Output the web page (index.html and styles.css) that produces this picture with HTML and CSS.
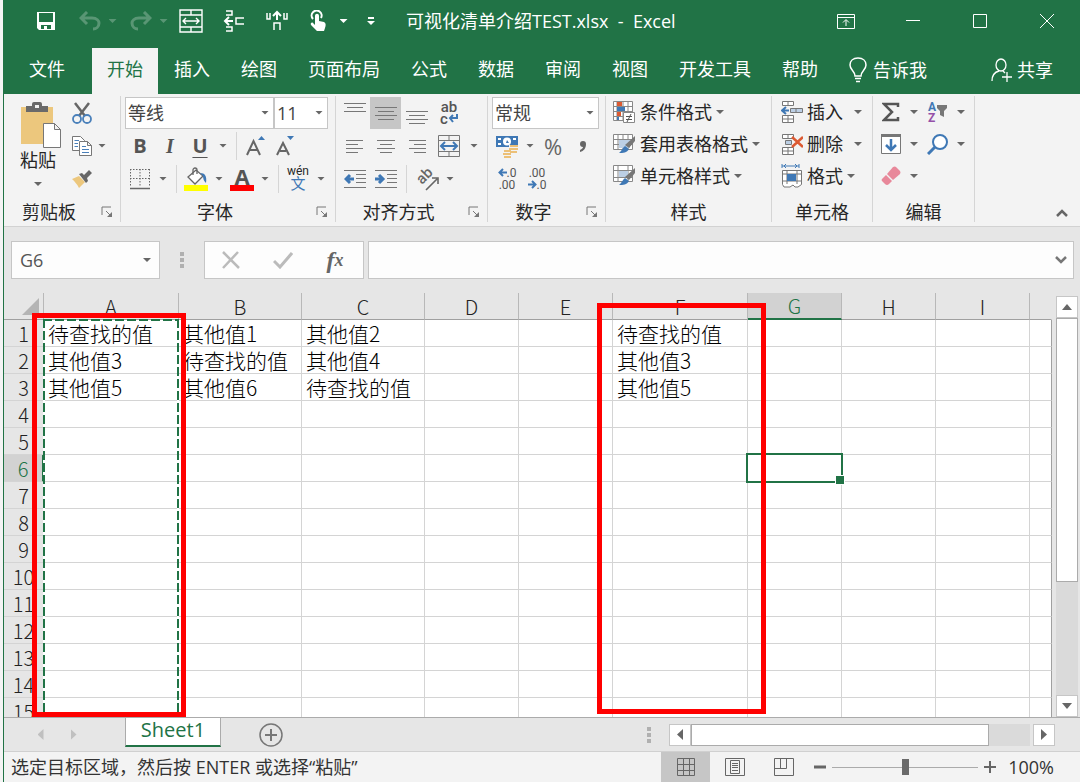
FILE: index.html
```html
<!DOCTYPE html>
<html lang="zh-CN">
<head>
  <meta charset="UTF-8" />
  <meta name="viewport" content="width=device-width, initial-scale=1" />
  <title>可视化清单介绍TEST.xlsx - Excel</title>
  <link rel="stylesheet" href="styles.css">
</head>
<body>

<!-- Shared icons -->
<svg class="sprite" aria-hidden="true">
  <symbol id="i-launch" viewBox="0 0 12 12">
    <path d="M1 9V1H10M5 5L10 10" fill="none" stroke="#777" />
    <path d="M11 6V11H6Z" fill="#777" />
  </symbol>
  <symbol id="i-brush" viewBox="0 0 22 22">
    <path d="M22 3L22 8L16 15L12 12Z" fill="#777" />
    <path d="M12 13L16 16C14 20 10 20 6 20C9 18 9 15 12 13Z" fill="#3f78b5" />
  </symbol>
</svg>

<div class="app">

<!-- Title bar -->
<header class="titlebar">
  <button class="qat" aria-label="保存">
    <svg width="20" height="20" viewBox="0 0 20 20"><path d="M1 1H19V19H3L1 17Z" fill="#fff" /><path d="M3 2H17V11H3ZM5 14H15V18H11V15H8V18H5Z" fill="#217346" /></svg>
  </button>
  <button class="qat split faded" aria-label="撤消">
    <svg width="22" height="20" viewBox="0 0 22 20"><path d="M2 7H13C18 7 20 10 20 12C20 16 17 18 14 18M8 1L2 7L8 13" fill="none" stroke="#fff" stroke-width="3" /></svg><i class="caret"></i>
  </button>
  <button class="qat split faded" aria-label="恢复">
    <svg width="22" height="20" viewBox="0 0 22 20"><path d="M20 7H9C4 7 2 10 2 12C2 16 5 18 8 18M14 1L20 7L14 13" fill="none" stroke="#fff" stroke-width="3" /></svg><i class="caret"></i>
  </button>
  <button class="qat" aria-label="合并后居中">
    <svg width="24" height="24" viewBox="0 0 24 24" fill="none" stroke="#fff" stroke-width="1.4"><path d="M1 1H23V23H1ZM1 6H23M1 18H23M12 1V6M12 18V23M4 12H20M7 9L4 12L7 15M17 9L20 12L17 15" /></svg>
  </button>
  <button class="qat" aria-label="插入单元格">
    <svg width="22" height="22" viewBox="0 0 22 22" fill="none" stroke="#fff" stroke-width="1.5"><path d="M3 1H9V5H3M3 21H9V17H3M21 8H13V14H21" /><path d="M10 11H3M6 7L2 11L6 15" stroke-width="2" /></svg>
  </button>
  <button class="qat" aria-label="插入工作表行">
    <svg width="24" height="22" viewBox="0 0 24 22" fill="none" stroke="#fff" stroke-width="1.5"><path d="M2 3V9H5V3M19 3V9H22V3M9 20V13H15V20" /><path d="M12 10V3M8 6L12 2L16 6" stroke-width="2" /></svg>
  </button>
  <button class="qat split" aria-label="触摸/鼠标模式">
    <svg width="22" height="22" viewBox="0 0 22 22"><path d="M3 9A5 5 0 1 1 11 8" fill="none" stroke="#fff" stroke-width="2" /><path d="M5 6C5 3 9 3 9 6V11L14 12C16 13 16 15 15 18L14 21H7L1 15C0 13 2 12 3 13L5 15Z" fill="#fff" /></svg><i class="caret"></i>
  </button>
  <button class="qat" aria-label="自定义快速访问工具栏">
    <svg width="8" height="10" viewBox="0 0 8 10"><path d="M1 1H7V3H1ZM0 5H8L4 9Z" fill="#fff" /></svg>
  </button>
  <h1 class="doc-title">可视化清单介绍TEST.xlsx &nbsp;-&nbsp; Excel</h1>
  <div class="window-buttons">
    <button aria-label="功能区显示选项"><svg width="18" height="18" viewBox="0 0 18 18" fill="none" stroke="#fff"><path d="M.5 2.5H17.5V16.5H.5ZM.5 5.5H17.5M9 14V8M6 10.5L9 7.5L12 10.5" /></svg></button>
    <button aria-label="最小化"><svg width="16" height="16" viewBox="0 0 16 16"><path d="M1 7.5H15" stroke="#fff" /></svg></button>
    <button aria-label="最大化"><svg width="16" height="18" viewBox="0 0 16 18"><path d="M1.5 2.5H14.5V15.5H1.5Z" fill="none" stroke="#fff" /></svg></button>
    <button aria-label="关闭"><svg width="16" height="16" viewBox="0 0 16 16"><path d="M1 1L15 15M15 1L1 15" stroke="#fff" /></svg></button>
  </div>
</header>

<!-- Ribbon tabs -->
<nav class="tabs">
  <a href="#" class="file">文件</a>
  <a href="#" class="active">开始</a>
  <a href="#">插入</a>
  <a href="#">绘图</a>
  <a href="#">页面布局</a>
  <a href="#">公式</a>
  <a href="#">数据</a>
  <a href="#">审阅</a>
  <a href="#">视图</a>
  <a href="#">开发工具</a>
  <a href="#">帮助</a>
  <a href="#" class="tell-me">
    <svg width="18" height="26" viewBox="0 0 18 26" fill="none" stroke="#fff" stroke-width="1.5"><path d="M6 19C6 14 1 13 1 8C1 4 4 1 9 1C14 1 17 4 17 8C17 13 12 14 12 19ZM6 21.5H12M7 24.5H11" /></svg>
    告诉我
  </a>
  <a href="#" class="share">
    <svg width="22" height="24" viewBox="0 0 22 24" fill="none" stroke="#fff" stroke-width="1.3"><path d="M10 1A5 6 0 0 1 10 13A5 6 0 0 1 10 1ZM1 23C1 17 4 14 8 13M12 13L14 15M16 14V24M11 19H21" /></svg>
    共享
  </a>
</nav>

<!-- Ribbon -->
<section class="ribbon">
  <div class="group g-clipboard">
    <div class="tools paste-tools">
      <button class="paste">
        <svg width="48" height="46" viewBox="-6 0 48 46"><path d="M1 5H33V42H1Z" fill="#ecc77d" /><path d="M6 4H12V2Q12 0 14 0H20Q22 0 22 2V4H28V10H6Z" fill="#6a6a6a" /><path d="M15 3H19V6H15Z" fill="#f3f3f3" /><path d="M23.5 21.5H34.5L40.5 27.5V45.5H23.5ZM34.5 21.5V27.5H40.5" fill="#fff" stroke="#777" /></svg>
        <span>粘贴</span>
        <i class="caret"></i>
      </button>
      <div class="rows">
        <div class="row">
          <button class="w24" aria-label="剪切"><svg width="20" height="22" viewBox="0 0 20 22"><path d="M3 1L13 14M17 1L7 14" stroke="#666" stroke-width="2.5" /><circle cx="5" cy="17" r="4" fill="none" stroke="#4a80ba" stroke-width="1.8" /><circle cx="15" cy="17" r="4" fill="none" stroke="#4a80ba" stroke-width="1.8" /></svg></button>
        </div>
        <div class="row">
          <button class="w24" aria-label="复制"><svg width="22" height="22" viewBox="0 0 22 22" fill="#fff" stroke="#777"><path d="M1.5 1.5H9.5L13.5 5.5V15.5H1.5Z" /><path d="M8.5 6.5H16.5L20.5 10.5V20.5H8.5ZM16.5 6.5V10.5H20.5" /><path d="M3.5 5.5H8M3.5 8.5H7M3.5 11.5H7M11 11.5H15M11 14.5H18M11 17.5H18" stroke="#4a80ba" /></svg></button>
          <button class="arrow" aria-label="复制选项"><i class="caret"></i></button>
        </div>
        <div class="row">
          <button class="w24" aria-label="格式刷"><svg width="22" height="20" viewBox="0 0 22 20"><path d="M1 10L8 7L14 13L8 19C6 15 4 13 1 10Z" fill="#ecc77d" /><path d="M8 5L11 4L13 6L18 1L21 4L16 9L17 12L15 14Z" fill="#666" /></svg></button>
        </div>
      </div>
    </div>
    <div class="caption"><span>剪贴板</span><button aria-label="剪贴板设置"><svg width="12" height="12"><use href="#i-launch" /></svg></button></div>
  </div>

  <div class="group g-font">
    <div class="tools">
      <div class="row">
        <div class="combo font-name"><select aria-label="字体"><option>等线</option></select><i class="caret"></i></div>
        <div class="combo font-size"><select aria-label="字号"><option>11</option></select><i class="caret"></i></div>
      </div>
      <div class="row">
        <button class="w30 letter" aria-label="加粗"><b>B</b></button>
        <button class="w30 letter italic" aria-label="倾斜"><b>I</b></button>
        <button class="w30 letter underline" aria-label="下划线"><b>U</b></button>
        <button class="arrow" aria-label="下划线选项"><i class="caret"></i></button>
        <i class="sep"></i>
        <button class="w30" aria-label="增大字号"><svg width="20" height="22" viewBox="0 0 20 22"><path d="M1 20L7.500 6L14 20M4 15H11" fill="none" stroke="#666" stroke-width="2" /><path d="M12 5H19L15.500 1Z" fill="#3f78b5" /></svg></button>
        <button class="w30" aria-label="减小字号"><svg width="20" height="22" viewBox="0 0 20 22"><path d="M1 20L7 8L13 20M4 16H10" fill="none" stroke="#666" stroke-width="2" /><path d="M11 1H18L14.500 5Z" fill="#3f78b5" /></svg></button>
      </div>
      <div class="row">
        <button class="w30" aria-label="边框"><svg width="22" height="22" viewBox="0 0 22 22" fill="none" stroke="#666"><path d="M1.5 1V19M11 1V19M20.5 1V19M1 1.5H21M1 10.5H21" stroke-dasharray="1.5 1.5" /><path d="M1 20.5H21" stroke-width="1.5" /></svg></button>
        <button class="arrow" aria-label="边框选项"><i class="caret"></i></button>
        <i class="sep"></i>
        <button class="w30" aria-label="填充颜色"><svg width="24" height="24" viewBox="0 0 24 24"><path d="M4 10L12 3L19 9L11 17Z" fill="#fff" stroke="#666" stroke-width="1.3" /><path d="M9 8V3A2 2 0 0 1 13 3V7" fill="none" stroke="#666" stroke-width="1.3" /><path d="M16 6C21 6 23 9 22 16C20 14 19 12 19 9Z" fill="#3f78b5" /><path d="M0 18H24V24H0Z" fill="#ff0" /></svg></button>
        <button class="arrow" aria-label="填充颜色选项"><i class="caret"></i></button>
        <button class="w30 font-color" aria-label="字体颜色"><b>A</b></button>
        <button class="arrow" aria-label="字体颜色选项"><i class="caret"></i></button>
        <i class="sep"></i>
        <button class="w30 phonetic" aria-label="拼音指南"><span>wén</span><span class="han">文</span></button>
        <button class="arrow" aria-label="拼音选项"><i class="caret"></i></button>
      </div>
    </div>
    <div class="caption"><span>字体</span><button aria-label="字体设置"><svg width="12" height="12"><use href="#i-launch" /></svg></button></div>
  </div>

  <div class="group g-align">
    <div class="tools">
      <div class="row">
        <button class="w31" aria-label="顶端对齐"><svg class="lines" width="22" height="22" viewBox="0 0 22 22"><path d="M0 1.5H22M3 5.5H19M0 9.5H22" /></svg></button>
        <button class="w31 pressed" aria-label="垂直居中"><svg class="lines" width="22" height="22" viewBox="0 0 22 22"><path d="M0 5.5H22M3 9.5H19M0 13.5H22M3 17.5H19" /></svg></button>
        <button class="w31" aria-label="底端对齐"><svg class="lines" width="22" height="22" viewBox="0 0 22 22"><path d="M0 9.5H22M3 13.5H19M0 17.5H22M3 21.5H19" /></svg></button>
        <button class="w34 wrap" aria-label="自动换行"><span>ab</span><span>c<svg width="10" height="9" viewBox="0 0 10 9"><path d="M9 0V4H2M5 1L2 4L5 8" fill="none" stroke="#3f78b5" stroke-width="2" /></svg></span></button>
      </div>
      <div class="row">
        <button class="w31" aria-label="左对齐"><svg class="lines" width="18" height="14" viewBox="0 0 18 14"><path d="M0 1.5H17M0 5.5H12M0 9.5H17M0 13.5H12" /></svg></button>
        <button class="w31" aria-label="居中"><svg class="lines" width="18" height="14" viewBox="0 0 18 14"><path d="M0 1.5H18M3 5.5H15M0 9.5H18M3 13.5H15" /></svg></button>
        <button class="w31" aria-label="右对齐"><svg class="lines" width="18" height="14" viewBox="0 0 18 14"><path d="M1 1.5H18M6 5.5H18M1 9.5H18M6 13.5H18" /></svg></button>
        <button class="w34" aria-label="合并后居中"><svg width="24" height="24" viewBox="0 0 24 24" fill="none" stroke="#777"><path d="M1.5 1.5H22.5V22.5H1.5ZM1 6.5H23M1 17.5H23M12 1V6M12 18V23" /><path d="M4 12H20M8 8L4 12L8 16M16 8L20 12L16 16" stroke="#3f78b5" stroke-width="2" /></svg></button>
        <button class="arrow" aria-label="合并选项"><i class="caret"></i></button>
      </div>
      <div class="row">
        <button class="w31" aria-label="减少缩进量"><svg class="lines" width="22" height="20" viewBox="0 0 22 20"><path d="M0 1.5H22M12 5.5H22M12 9.5H22M12 13.5H22M0 18.5H22" /><path d="M10 10H3M6 6L2 10L6 14" class="blue" /></svg></button>
        <button class="w31" aria-label="增加缩进量"><svg class="lines" width="22" height="20" viewBox="0 0 22 20"><path d="M0 1.5H22M12 5.5H22M12 9.5H22M12 13.5H22M0 18.5H22" /><path d="M0 10H7M4 6L8 10L4 14" class="blue" /></svg></button>
        <i class="sep near"></i>
        <button class="w30" aria-label="方向"><svg class="orient" width="26" height="26" viewBox="0 0 26 26"><text x="0" y="0" class="slanted" transform="translate(8 19) rotate(-45)">ab</text><path d="M12 24L23 13M18 12H24V18" fill="none" stroke="#666" stroke-width="1.6" /></svg></button>
        <button class="arrow" aria-label="方向选项"><i class="caret"></i></button>
      </div>
    </div>
    <div class="caption"><span>对齐方式</span><button aria-label="对齐设置"><svg width="12" height="12"><use href="#i-launch" /></svg></button></div>
  </div>

  <div class="group g-number">
    <div class="tools">
      <div class="row">
        <div class="combo number-format"><select aria-label="数字格式"><option>常规</option></select><i class="caret"></i></div>
      </div>
      <div class="row">
        <button class="w30" aria-label="会计数字格式"><svg width="24" height="24" viewBox="0 0 24 24"><path d="M1 2H23V13H1Z" fill="#3f78b5" /><circle cx="12" cy="7.5" r="4" fill="#fff" /><path d="M3 4H6V6H3ZM18 4H21V6H18ZM3 9H6V11H3Z" fill="#fff" /><path d="M12 6L14 9H11Z" fill="#3f78b5" /><path d="M14 11H23V21H17V24H8V15H14Z" fill="#f3f3f3" /><path d="M15 12H23M14 15H23M15 18H22M9 17H16M8 20H16M9 23H16" stroke="#ecc077" stroke-width="2.2" /></svg></button>
        <button class="arrow" aria-label="会计格式选项"><i class="caret"></i></button>
        <button class="w30 percent" aria-label="百分比样式">%</button>
        <button class="w30" aria-label="千位分隔样式"><svg width="8" height="12" viewBox="0 0 8 12"><path d="M1 4A3 3 0 1 1 7 4C7 8 5 11 1 12L1 10C3 9 4 8 4 7A3 3 0 0 1 1 4Z" fill="#666" /></svg></button>
      </div>
      <div class="row">
        <button class="w30 decimal" aria-label="增加小数位数"><span><svg width="9" height="9" viewBox="0 0 9 9"><path d="M9 4.5H2M5 1L1.5 4.5L5 8" fill="none" stroke="#3f78b5" stroke-width="2" /></svg>.0</span><span>.00</span></button>
        <button class="w30 decimal" aria-label="减少小数位数"><span>.00</span><span><svg width="9" height="9" viewBox="0 0 9 9"><path d="M0 4.5H7M4 1L7.5 4.5L4 8" fill="none" stroke="#3f78b5" stroke-width="2" /></svg>.0</span></button>
      </div>
    </div>
    <div class="caption"><span>数字</span><button aria-label="数字设置"><svg width="12" height="12"><use href="#i-launch" /></svg></button></div>
  </div>

  <div class="group g-styles">
    <div class="tools compact">
      <button class="command"><svg width="24" height="24" viewBox="0 0 24 24" fill="#fff" stroke="#888"><path d="M1.5 1.5H20.5V20.5H1.5ZM1 6.5H20M1 11.5H20M1 16.5H20M11 1V20M16 1V20M5 1V20" /><path d="M5 2H10V6H5ZM5 12H9V16H5Z" fill="#dc5a32" stroke="none" /><path d="M5 7H13V11H5ZM5 17H7V20H5Z" fill="#3f78b5" stroke="none" /><path d="M11.5 12.5H22.5V22.5H11.5Z" /><path d="M14 16.5H20M14 19.5H20M19 14L15 22" stroke="#555" /></svg>条件格式<i class="caret"></i></button>
      <button class="command"><svg width="24" height="24" viewBox="0 0 24 24" fill="#fff" stroke="#888"><path d="M1.5 2.5H20.5V17.5H1.5ZM1 7.5H20M1 12.5H20M6 2V17M11 2V17M16 2V17" /><path d="M7 8H18V16H7Z" fill="#bccfe5" stroke="none" /><use href="#i-brush" x="1" y="1" width="22" height="22" stroke="none" /></svg>套用表格格式<i class="caret"></i></button>
      <button class="command"><svg width="24" height="24" viewBox="0 0 24 24" fill="#fff" stroke="#888"><path d="M1.5 1.5H20.5V17.5H1.5ZM1 6.5H20M1 13.5H20M6 1V17M16 1V17" /><path d="M7 7H16V13H7Z" fill="#bccfe5" stroke="none" /><use href="#i-brush" x="1" y="1" width="22" height="22" stroke="none" /></svg>单元格样式<i class="caret"></i></button>
    </div>
    <div class="caption"><span>样式</span></div>
  </div>

  <div class="group g-cells">
    <div class="tools compact">
      <button class="command"><svg width="22" height="24" viewBox="0 0 22 24" fill="#fff" stroke="#777"><path d="M1.5 1.5H12.5V5.5H1.5ZM7 1V5M1.5 15.5H12.5V22.5H1.5ZM7 15V22M1 19H12" /><path d="M9.5 8.5H21.5V12.5H9.5ZM15 8V12" fill="#bccfe5" /><path d="M8 10.5H2M5 7L1 10.5L5 14" fill="none" stroke="#3f78b5" stroke-width="2" /></svg>插入<i class="caret far"></i></button>
      <button class="command"><svg width="22" height="24" viewBox="0 0 22 24" fill="#fff" stroke="#777"><path d="M1.5 2.5H12.5V6.5H1.5ZM7 2V6M1.5 15.5H12.5V22.5H1.5ZM7 15V22M1 19H12" /><path d="M4.5 8.5H10.5V12.5H4.5Z" fill="#bccfe5" /><path d="M11 5L22 15M22 5L11 15" fill="none" stroke="#dc5a32" stroke-width="2.5" /></svg>删除<i class="caret far"></i></button>
      <button class="command"><svg width="22" height="24" viewBox="0 0 22 24" fill="#fff" stroke="#777"><path d="M1.5 6.5H20.5V20.5L17 23H14L12 21L9 23H3L1.5 20.5ZM6 6V20M16 6V20M1 10H20M1 17H20" /><path d="M6 10H15V17H6Z" fill="#3f78b5" stroke="none" /><path d="M1 2H18M1 0V4M18 0V4M5 0L3 2L5 4M14 0L16 2L14 4" fill="none" stroke="#3f78b5" /></svg>格式<i class="caret"></i></button>
    </div>
    <div class="caption"><span>单元格</span></div>
  </div>

  <div class="group g-editing">
    <div class="tools compact">
      <div class="row">
        <button class="w30" aria-label="自动求和"><svg width="18" height="20" viewBox="0 0 18 20"><path d="M16 5V2H2L10 10L2 18H16V15" fill="none" stroke="#555" stroke-width="2.5" /></svg></button>
        <button class="arrow" aria-label="求和选项"><i class="caret"></i></button>
        <button class="w31" aria-label="排序和筛选"><svg width="22" height="24" viewBox="0 0 22 24"><text x="1" y="11" class="az" fill="#3f78b5">A</text><text x="1" y="22" class="az" fill="#9550a8">Z</text><path d="M10 5H20V8L17 11V17L13 15V11L10 8Z" fill="#777" /></svg></button>
        <button class="arrow" aria-label="排序选项"><i class="caret"></i></button>
      </div>
      <div class="row">
        <button class="w30" aria-label="填充"><svg width="20" height="22" viewBox="0 0 20 22"><path d="M.5 1.5H19.5V20.5H.5Z" fill="#fff" stroke="#777" /><path d="M0 1H20V4H0Z" fill="#777" /><path d="M10 6V17M5 12L10 17L15 12" fill="none" stroke="#3f78b5" stroke-width="2.5" /></svg></button>
        <button class="arrow" aria-label="填充选项"><i class="caret"></i></button>
        <button class="w31" aria-label="查找和选择"><svg width="22" height="22" viewBox="0 0 22 22"><circle cx="13" cy="9" r="7" fill="#fff" stroke="#3f78b5" stroke-width="2" /><path d="M8 14L1 21" stroke="#3f78b5" stroke-width="3" /></svg></button>
        <button class="arrow" aria-label="查找选项"><i class="caret"></i></button>
      </div>
      <div class="row">
        <button class="w30" aria-label="清除"><svg width="20" height="20" viewBox="0 0 20 20"><path d="M12 1Q14 0 15 1L19 5Q20 6 19 8L12 14L6 8Z" fill="#e8889a" /><path d="M5 9L11 15L8 18Q6 20 4 18L1 15Q0 14 1 13Z" fill="#e8889a" /></svg></button>
        <button class="arrow" aria-label="清除选项"><i class="caret"></i></button>
      </div>
    </div>
    <div class="caption"><span>编辑</span></div>
  </div>

  <button class="collapse" aria-label="折叠功能区"><svg width="14" height="10" viewBox="0 0 14 10"><path d="M2 8L7 3L12 8" fill="none" stroke="#666" stroke-width="2.5" /></svg></button>
</section>

<!-- Formula bar -->
<section class="formula-bar">
  <div class="combo name-box"><input type="text" aria-label="名称框" value="G6" /><i class="caret"></i></div>
  <div class="dots"></div>
  <div class="formula-buttons">
    <button aria-label="取消"><svg width="20" height="18" viewBox="0 0 20 18"><path d="M2 1L18 17M17 1L2 17" stroke="#bbb" stroke-width="2.5" /></svg></button>
    <button aria-label="输入"><svg width="20" height="18" viewBox="0 0 20 18"><path d="M1 10L7 16L19 2" fill="none" stroke="#bbb" stroke-width="3" /></svg></button>
    <button class="fx" aria-label="插入函数">f<small>x</small></button>
  </div>
  <div class="formula-box">
    <input type="text" aria-label="编辑栏" />
    <button aria-label="展开编辑栏"><svg width="12" height="8" viewBox="0 0 12 8"><path d="M1 1L6 6L11 1" fill="none" stroke="#777" stroke-width="2.5" /></svg></button>
  </div>
</section>

<!-- Worksheet -->
<main class="sheet">
  <div class="grid-area">
    <table class="grid">
      <colgroup>
        <col class="c-head"><col class="c-wide"><col class="c-mid"><col class="c-mid"><col class="c-std"><col class="c-std"><col class="c-wide"><col class="c-std"><col class="c-std"><col class="c-std"><col>
      </colgroup>
      <thead>
        <tr><th class="corner"><svg width="18" height="17" viewBox="0 0 18 17"><path d="M17 0V17H0Z" fill="#b4b4b4" /></svg></th><th>A</th><th>B</th><th>C</th><th>D</th><th>E</th><th>F</th><th class="current">G</th><th>H</th><th>I</th><th></th></tr>
      </thead>
      <tbody>
        <tr><th>1</th><td>待查找的值</td><td>其他值1</td><td>其他值2</td><td></td><td></td><td>待查找的值</td><td></td><td></td><td></td><td></td></tr>
        <tr><th>2</th><td>其他值3</td><td>待查找的值</td><td>其他值4</td><td></td><td></td><td>其他值3</td><td></td><td></td><td></td><td></td></tr>
        <tr><th>3</th><td>其他值5</td><td>其他值6</td><td>待查找的值</td><td></td><td></td><td>其他值5</td><td></td><td></td><td></td><td></td></tr>
        <tr><th>4</th><td></td><td></td><td></td><td></td><td></td><td></td><td></td><td></td><td></td><td></td></tr>
        <tr><th>5</th><td></td><td></td><td></td><td></td><td></td><td></td><td></td><td></td><td></td><td></td></tr>
        <tr><th class="current">6</th><td></td><td></td><td></td><td></td><td></td><td></td><td class="selected"></td><td></td><td></td><td></td></tr>
        <tr><th>7</th><td></td><td></td><td></td><td></td><td></td><td></td><td></td><td></td><td></td><td></td></tr>
        <tr><th>8</th><td></td><td></td><td></td><td></td><td></td><td></td><td></td><td></td><td></td><td></td></tr>
        <tr><th>9</th><td></td><td></td><td></td><td></td><td></td><td></td><td></td><td></td><td></td><td></td></tr>
        <tr><th>10</th><td></td><td></td><td></td><td></td><td></td><td></td><td></td><td></td><td></td><td></td></tr>
        <tr><th>11</th><td></td><td></td><td></td><td></td><td></td><td></td><td></td><td></td><td></td><td></td></tr>
        <tr><th>12</th><td></td><td></td><td></td><td></td><td></td><td></td><td></td><td></td><td></td><td></td></tr>
        <tr><th>13</th><td></td><td></td><td></td><td></td><td></td><td></td><td></td><td></td><td></td><td></td></tr>
        <tr><th>14</th><td></td><td></td><td></td><td></td><td></td><td></td><td></td><td></td><td></td><td></td></tr>
        <tr><th>15</th><td></td><td></td><td></td><td></td><td></td><td></td><td></td><td></td><td></td><td></td></tr>
      </tbody>
    </table>
    <svg class="copy-border" aria-hidden="true"><line x1="0" y1="1" x2="100%" y2="1" /><line x1="1" y1="0" x2="1" y2="100%" /><line x1="135" y1="0" x2="135" y2="100%" /></svg>
    <div class="mark mark-a"></div>
    <div class="mark mark-f"></div>
  </div>
  <div class="vscroll">
    <button aria-label="向上滚动"><i class="tri up"></i></button>
    <div class="track"><div class="thumb"></div></div>
    <button aria-label="向下滚动"><i class="tri down"></i></button>
  </div>
</main>

<!-- Sheet tabs -->
<section class="sheet-bar">
  <button class="step" aria-label="上一个工作表"><i class="tri left"></i></button>
  <button class="step" aria-label="下一个工作表"><i class="tri right"></i></button>
  <a href="#" class="sheet-tab">Sheet1</a>
  <button class="add" aria-label="新工作表"><svg width="24" height="24" viewBox="0 0 24 24" fill="none" stroke="#777"><circle cx="12" cy="12" r="11" stroke-width="1.5" /><path d="M6 12H18M12 6V18" stroke-width="2" /></svg></button>
  <div class="dots"></div>
  <div class="hscroll">
    <button aria-label="向左滚动"><i class="tri left"></i></button>
    <div class="track"><div class="thumb"></div></div>
    <button aria-label="向右滚动"><i class="tri right"></i></button>
  </div>
</section>

<!-- Status bar -->
<footer class="status-bar">
  <span class="message">选定目标区域，然后按 ENTER 或选择<q>粘贴</q></span>
  <button class="view active" aria-label="普通"><svg width="20" height="20" viewBox="0 0 20 20" fill="none" stroke="#666"><path d="M1.5 1.5H18.5V18.5H1.5ZM7.5 1V19M13.5 1V19M1 7.5H19M1 13.5H19" /></svg></button>
  <button class="view" aria-label="页面布局"><svg width="20" height="20" viewBox="0 0 20 20" fill="none" stroke="#666"><path d="M.5 1.5H19.5V18.5H.5ZM5.5 3.5H14.5V16.5H5.5ZM7 6.5H13M7 8.5H13M7 10.5H13M7 13.5H13" /></svg></button>
  <button class="view" aria-label="分页预览"><svg width="20" height="20" viewBox="0 0 20 20" fill="none" stroke="#666"><path d="M.5 1.5H19.5V18.5H.5ZM.5 11.5H12.5V1.5M6.5 1.5V11.5" /></svg></button>
  <button class="zoom" aria-label="缩小"><svg width="12" height="12" viewBox="0 0 12 12"><path d="M0 6H12" stroke="#666" stroke-width="3" /></svg></button>
  <input type="range" aria-label="显示比例" min="0" max="100" value="50" />
  <button class="zoom" aria-label="放大"><svg width="12" height="12" viewBox="0 0 12 12"><path d="M0 6H12M6 0V12" stroke="#666" stroke-width="2" /></svg></button>
  <a href="#" class="percent-label">100%</a>
</footer>

</div>
</body>
</html>
```

FILE: styles.css
```css
* {
  box-sizing: border-box;
}

body {
  margin: 0;
  background-color: #f4f4f4;
  color: #262626;
  font-family: "Open Sans", "Noto Sans CJK SC", sans-serif;
  font-size: 18px;
  line-height: 24px;
}

button {
  display: flex;
  align-items: center;
  justify-content: center;
  flex-shrink: 0;
  margin: 0;
  padding: 0;
  border: none;
  background: none;
  color: inherit;
  font: inherit;
}

a {
  color: inherit;
  text-decoration: none;
}

svg {
  display: block;
  flex-shrink: 0;
}

.sprite {
  width: 0;
  height: 0;
  position: absolute;
}

.app {
  display: flex;
  flex-direction: column;
  height: 100vh;
  margin-left: 3px;
  border-left: 1px solid #217346;
  overflow: hidden;
}

.caret {
  flex-shrink: 0;
  width: 8px;
  height: 4px;
  background-color: #666;
  clip-path: polygon(0 0, 100% 0, 50% 100%);
}

/* Title bar */
.titlebar {
  display: flex;
  align-items: center;
  flex-shrink: 0;
  height: 48px;
  padding: 0 0 6px 20px;
  background-color: #217346;
  color: #fff;
}

.qat {
  width: 43px;
  height: 40px;
}

.qat.split {
  width: 51px;
  padding-left: 10px;
  gap: 8px;
}

.qat .caret {
  background-color: #fff;
}

.qat.faded {
  opacity: 0.25;
}

.doc-title {
  flex: 1;
  margin: 0;
  padding-left: 14px;
  font-size: 18px;
  font-weight: normal;
  white-space: nowrap;
}

.window-buttons {
  display: flex;
}

.window-buttons button {
  width: 67px;
  height: 40px;
}

/* Tabs */
.tabs {
  display: flex;
  gap: 1px;
  flex-shrink: 0;
  height: 46px;
  background-color: #217346;
  color: #fff;
  white-space: nowrap;
}

.tabs a {
  display: flex;
  align-items: center;
  padding: 0 15px 4px;
}

.tabs .file {
  padding-left: 25px;
  padding-right: 26px;
}

.tabs .active {
  background-color: #f3f3f3;
  color: #217346;
}

.tabs .tell-me {
  gap: 6px;
  padding-top: 2px;
}

.tabs .share {
  gap: 4px;
  margin-left: auto;
  padding-top: 2px;
  padding-right: 27px;
}

/* Ribbon */
.ribbon {
  display: flex;
  flex-shrink: 0;
  height: 133px;
  padding: 2px 0 4px;
  background-color: #f3f3f3;
  border-bottom: 1px solid #d2d2d2;
}

.group {
  display: flex;
  flex-direction: column;
  flex-shrink: 0;
  border-right: 1px solid #d5d5d5;
}

.g-clipboard { width: 117px; }
.g-font { width: 215px; }
.g-align { width: 152px; }
.g-number { width: 118px; }
.g-styles { width: 166px; }
.g-cells { width: 101px; }
.g-editing { width: 102px; }

.tools {
  flex: 1;
  padding-left: 4px;
}

.g-align .tools,
.g-styles .tools,
.g-editing .tools {
  padding-left: 3px;
}

.row {
  display: flex;
  align-items: center;
  height: 33px;
}

.compact .row {
  height: 32px;
}

.w24 { width: 24px; }
.w30 { width: 30px; }
.w31 { width: 31px; }
.w34 { width: 34px; }

.row button {
  height: 32px;
}

.row .arrow {
  width: 16px;
}

.sep {
  width: 1px;
  height: 28px;
  margin: 0 4px 0 5px;
  background-color: #d5d5d5;
}

.sep.near {
  margin: 0 5px;
}

.caption {
  display: flex;
  align-items: center;
  height: 20px;
}

.caption span {
  flex: 1;
  text-align: center;
}

.caption button {
  width: 26px;
  height: 20px;
}

.paste-tools {
  display: flex;
}

.paste {
  flex-direction: column;
  justify-content: flex-start;
  width: 60px;
  padding-top: 6px;
}

.paste .caret {
  margin-top: 10px;
}

.rows {
  padding-left: 2px;
}

.combo {
  display: grid;
  align-items: center;
  height: 32px;
  background-color: #fff;
  border: 1px solid #c6c6c6;
}

.combo select,
.combo input,
.combo .caret {
  grid-area: 1 / 1;
}

.combo select,
.combo input {
  appearance: none;
  width: 100%;
  height: 30px;
  padding: 0 2px;
  border: none;
  background: none;
  color: #444;
  font: inherit;
}

.combo .caret {
  justify-self: end;
  margin-right: 4px;
  pointer-events: none;
}

.font-name { width: 149px; }
.font-size { width: 54px; }
.number-format { width: 107px; }

.letter {
  color: #555;
  font-size: 20px;
}

.italic {
  font-family: "Liberation Serif", serif;
  font-style: italic;
}

.underline b {
  text-decoration: underline;
  text-decoration-thickness: 1px;
  text-underline-offset: 4px;
}

.font-color {
  color: #555;
  font-size: 22px;
  line-height: 18px;
}

.font-color b {
  width: 24px;
  border-bottom: 6px solid #f00;
}

.phonetic {
  flex-direction: column;
  font-family: Roboto, "Noto Sans CJK SC", sans-serif;
  font-size: 12px;
  line-height: 11px;
}

.phonetic .han {
  color: #3f78b5;
  font-size: 15px;
  line-height: 15px;
}

.lines {
  fill: none;
  stroke: #777;
}

.lines .blue {
  stroke: #3f78b5;
  stroke-width: 3;
}

.pressed {
  background-color: #c6c6c6;
}

.wrap {
  flex-direction: column;
  color: #555;
  font-family: Roboto, sans-serif;
  font-size: 15px;
  font-weight: 500;
  line-height: 12px;
}

.wrap span {
  display: flex;
  align-items: center;
}

.orient {
  overflow: visible;
}

.slanted {
  fill: #666;
  font-family: Roboto, sans-serif;
  font-size: 15px;
  font-weight: 500;
}

.az {
  font-family: Roboto, sans-serif;
  font-size: 12px;
  font-weight: bold;
}

.percent {
  color: #666;
  font-size: 22px;
}

.decimal {
  flex-direction: column;
  align-items: center;
  color: #555;
  font-family: Roboto, sans-serif;
  font-size: 12px;
  line-height: 12px;
}

.decimal span {
  display: flex;
  align-items: center;
}

.command {
  gap: 4px;
  height: 32px;
  padding-left: 3px;
}

.g-cells .command {
  padding-left: 5px;
}

.command .far {
  margin-left: 7px;
}

.collapse {
  align-self: flex-end;
  width: 36px;
  height: 18px;
  margin-left: auto;
}

/* Formula bar */
.formula-bar {
  display: flex;
  align-items: flex-start;
  flex-shrink: 0;
  height: 66px;
  padding: 14px 6px 0 7px;
  background-color: #e6e6e6;
}

.name-box {
  width: 149px;
  height: 38px;
  background-color: #fdfdfd;
}

.name-box input {
  padding-left: 8px;
  color: #555;
}

.name-box .caret {
  margin-right: 8px;
}

.dots {
  flex-shrink: 0;
  width: 4px;
  height: 16px;
  background: repeating-linear-gradient(#b0b0b0 0 4px, transparent 4px 6px);
}

.formula-bar .dots {
  margin: 11px 20px;
}

.formula-buttons {
  display: flex;
  width: 160px;
  height: 38px;
  background-color: #fdfdfd;
  border: 1px solid #c6c6c6;
}

.formula-buttons button {
  width: 52px;
}

.fx {
  color: #666;
  font-family: "Liberation Serif", serif;
  font-size: 24px;
  font-style: italic;
  font-weight: bold;
}

.fx small {
  font-size: 18px;
}

.formula-box {
  display: flex;
  flex: 1;
  height: 38px;
  margin-left: 4px;
  background-color: #fdfdfd;
  border: 1px solid #c6c6c6;
}

.formula-box input {
  flex: 1;
  min-width: 0;
  border: none;
  background: none;
  font: inherit;
}

.formula-box button {
  width: 24px;
}

/* Worksheet */
.sheet {
  display: flex;
  flex: 1;
  min-height: 0;
  background-color: #e6e6e6;
}

.grid-area {
  flex: 1;
  min-width: 0;
  position: relative;
  overflow: hidden;
}

.grid {
  width: 100%;
  table-layout: fixed;
  border-spacing: 0;
  font-family: "Noto Sans CJK SC", sans-serif;
  font-weight: 300;
  font-size: 21px;
  line-height: 26px;
  color: #000;
}

.c-head { width: 40px; }
.c-wide { width: 135px; }
.c-mid { width: 123px; }
.c-std { width: 94px; }

.grid th,
.grid td {
  height: 27px;
  padding: 0;
  border-right: 1px solid #d4d4d4;
  border-bottom: 1px solid #d4d4d4;
  white-space: nowrap;
}

.grid td {
  padding-left: 4px;
  background-color: #fff;
}

.grid td:last-child {
  border-right-color: #a0a0a0;
}

.grid th {
  background-color: #e6e6e6;
  border-right-color: #b8b8b8;
  color: #222;
  font-weight: 300;
  font-size: 20px;
  line-height: 25px;
}

.grid thead th {
  border-bottom-color: #a0a0a0;
}

.grid thead th:last-child {
  border-right-color: #e6e6e6;
}

.grid .corner svg {
  margin-left: 18px;
}

.grid th.current {
  background-color: #d2d2d2;
  color: #217346;
}

.grid thead .current {
  border-bottom: 2px solid #217346;
}

.grid tbody .current {
  border-right: 2px solid #217346;
}

.grid .selected {
  position: relative;
}

.selected::before {
  content: "";
  position: absolute;
  inset: -2px;
  border: 2px solid #217346;
}

.selected::after {
  content: "";
  position: absolute;
  right: -4px;
  bottom: -4px;
  width: 8px;
  height: 8px;
  background-color: #217346;
  border: 1px solid #fff;
}

/* Dashed outline of the copied column */
.copy-border {
  position: absolute;
  left: 39px;
  top: 26px;
  width: 136px;
  height: calc(100% - 26px);
  stroke: #217346;
  stroke-width: 2;
  stroke-dasharray: 9 3;
  background: linear-gradient(#fff, #fff) left / 2px 100% no-repeat, linear-gradient(#fff, #fff) right / 2px 100% no-repeat;
}

.mark {
  position: absolute;
  border: 5px solid #f00;
}

.mark-a {
  left: 28px;
  top: 20px;
  bottom: 0;
  width: 154px;
}

.mark-f {
  left: 593px;
  top: 10px;
  bottom: 3px;
  width: 169px;
}

/* Scrollbars */
.tri {
  width: 10px;
  height: 6px;
  background-color: #666;
}

.tri.up { clip-path: polygon(0 100%, 50% 0, 100% 100%); }
.tri.down { clip-path: polygon(0 0, 100% 0, 50% 100%); }

.tri.left,
.tri.right {
  width: 6px;
  height: 11px;
}

.tri.left { clip-path: polygon(100% 0, 100% 100%, 0 50%); }
.tri.right { clip-path: polygon(0 0, 100% 50%, 0 100%); }

.vscroll {
  display: flex;
  flex-direction: column;
  width: 28px;
  padding: 3px 2px 0 4px;
}

.vscroll button,
.hscroll button {
  width: 22px;
  height: 22px;
  background-color: #fff;
  border: 1px solid #c6c6c6;
}

.track {
  flex: 1;
  background-color: #dadada;
}

.thumb {
  background-color: #fff;
  border: 1px solid #ababab;
}

.vscroll .thumb {
  height: 70%;
}

.hscroll {
  display: flex;
  width: 37%;
  min-width: 386px;
  height: 22px;
}

.hscroll .thumb {
  width: 88%;
  height: 22px;
}

.hscroll button:last-child {
  margin-left: 3px;
}

/* Sheet tabs */
.sheet-bar {
  display: flex;
  align-items: center;
  flex-shrink: 0;
  height: 34px;
  padding: 0 25px 0 20px;
  background-color: #e6e6e6;
  border-top: 1px solid #ababab;
}

.step {
  width: 33px;
  height: 24px;
}

.step .tri {
  background-color: #c0c0c0;
}

.sheet-tab {
  align-self: flex-start;
  width: 96px;
  height: 29px;
  margin-left: 35px;
  background-color: #fff;
  border: 1px solid #ababab;
  border-top: none;
  border-bottom: 2px solid #217346;
  color: #217346;
  font-size: 20px;
  text-align: center;
}

.add {
  margin-left: 38px;
}

.sheet-bar .dots {
  margin: 0 18px 0 auto;
}

/* Status bar */
.status-bar {
  display: flex;
  align-items: center;
  flex-shrink: 0;
  height: 31px;
  padding-right: 26px;
  background-color: #f3f3f3;
  border-top: 1px solid #d0d0d0;
  color: #333;
}

.message {
  flex: 1;
  padding-left: 7px;
  white-space: nowrap;
}

.message q {
  quotes: "“" "”";
}

.view {
  width: 49px;
  height: 30px;
}

.view.active {
  background-color: #c6c6c6;
}

.zoom {
  width: 24px;
  height: 24px;
}

.status-bar input {
  appearance: none;
  width: 146px;
  height: 16px;
  margin: 0;
  background: linear-gradient(#ababab, #ababab) center / 100% 1px no-repeat;
}

.status-bar input::-webkit-slider-thumb {
  appearance: none;
  width: 7px;
  height: 16px;
  background-color: #6a6a6a;
}

.percent-label {
  margin-left: 6px;
}
```
